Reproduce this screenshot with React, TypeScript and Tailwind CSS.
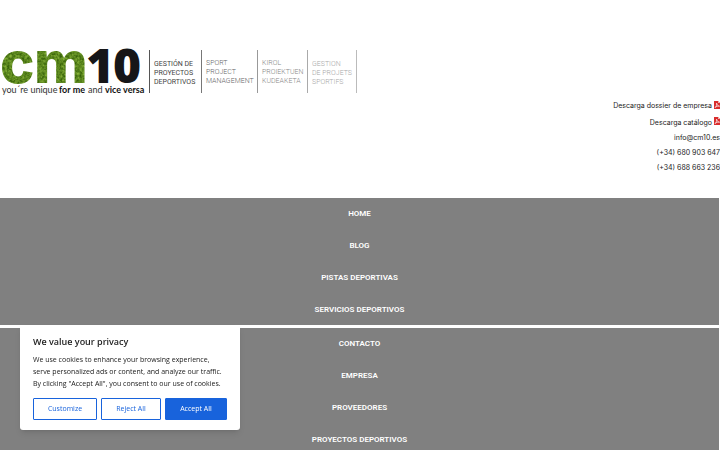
import { useState } from "react";

const mainLinks = ["HOME", "BLOG", "PISTAS DEPORTIVAS", "SERVICIOS DEPORTIVOS"];
const companyLinks = ["CONTACTO", "EMPRESA", "PROVEEDORES", "PROYECTOS DEPORTIVOS"];

function Logo() {
  return (
    <svg width="360" height="49" viewBox="0 0 360 49" role="img" aria-label="cm10" className="block overflow-visible">
      <defs>
        <filter id="grass" x="0" y="0" width="100%" height="100%" colorInterpolationFilters="sRGB">
          <feTurbulence type="fractalNoise" baseFrequency="0.4" numOctaves="2" seed="4" />
          <feColorMatrix values="0.5 0 0 0 0.11  0.5 0 0 0 0.28  0.3 0 0 0 -0.03  0 0 0 0 1" />
          <feComposite in2="SourceGraphic" operator="in" />
        </filter>
      </defs>
      <g filter="url(#grass)" fill="#5b8c1f" fontFamily="Inter, sans-serif" fontSize="58" fontWeight="800">
        <text x="0" y="35">c</text>
        <text x="34" y="35">m</text>
      </g>
      <g fill="#161618" fontFamily="'Open Sans', sans-serif" fontSize="48" fontWeight="800">
        <text x="86" y="35">1</text>
        <text x="113" y="35">0</text>
      </g>
      <g fontFamily="Lato, sans-serif" fontSize="9" fill="#333">
        <text x="2" y="45">you´re unique</text>
        <text x="59" y="45" fontWeight="700" fill="#111">for me</text>
        <text x="88" y="45">and</text>
        <text x="105" y="45" fontWeight="700" fill="#111">vice versa</text>
      </g>
      <g fontFamily="Roboto, sans-serif" fontSize="7" fontWeight="300">
        <g fill="#444" fontWeight="400">
          <text x="154" y="18">GESTIÓN DE</text>
          <text x="154" y="27">PROYECTOS</text>
          <text x="154" y="36">DEPORTIVOS</text>
        </g>
        <g fill="#666">
          <text x="206" y="17">SPORT</text>
          <text x="206" y="26">PROJECT</text>
          <text x="206" y="35">MANAGEMENT</text>
        </g>
        <g fill="#888">
          <text x="262" y="17">KIROL</text>
          <text x="262" y="26">PROIEKTUEN</text>
          <text x="262" y="35">KUDEAKETA</text>
        </g>
        <g fill="#a8a8a8">
          <text x="312" y="18">GESTION</text>
          <text x="312" y="27">DE PROJETS</text>
          <text x="312" y="36">SPORTIFS</text>
        </g>
      </g>
      <path d="M149.500 2V45" stroke="#555" />
      <path d="M201.500 2V45" stroke="#777" />
      <path d="M257.500 2V45" stroke="#999" />
      <path d="M307.500 2V45" stroke="#aaa" />
      <path d="M356.500 2V45" stroke="#bbb" />
    </svg>
  );
}

function PdfIcon() {
  return (
    <svg width="6" height="8" viewBox="0 0 6 8" aria-hidden="true" className="mb-[2px] shrink-0">
      <path d="M0 0H4L6 2V8H0Z" fill="#d92d2d" />
      <path d="M4 0V2H6Z" fill="#f3b5b5" />
      <path d="M1 6.500C2.500 5.500 2.800 3.500 2.600 2.200C3 4 4 5 5.500 5.200C4 4.800 2.500 5.300 1 6.500Z" fill="none" stroke="#fff" strokeWidth="0.700" />
    </svg>
  );
}

function Menu({ label, items }: { label: string; items: string[] }) {
  return (
    <nav aria-label={label} className="mr-px bg-[#808080]">
      <ul>
        {items.map((item) => (
          <li key={item} className="h-8 last:h-[31px]">
            <a href="#" className="flex justify-center pt-[10px] text-[8px] leading-[12px] font-semibold text-white">
              {item}
            </a>
          </li>
        ))}
      </ul>
    </nav>
  );
}

function CookieBanner({ onClose }: { onClose: () => void }) {
  return (
    <section
      aria-label="We value your privacy"
      className="fixed bottom-5 left-5 w-[220px] rounded-[3px] bg-white px-[13px] py-[10px] font-['Open_Sans',sans-serif] text-[#212121] shadow-md"
    >
      <h2 className="text-[9px] leading-[14px] font-semibold">We value your privacy</h2>
      <p className="mt-[5px] text-[7px] leading-3">
        We use cookies to enhance your browsing experience, serve personalized ads or content, and analyze our traffic. By clicking "Accept All", you consent to our use of cookies.
      </p>
      <div className="mt-2 flex gap-1 text-[7px] leading-3 text-[#1863dc]">
        <button type="button" className="h-[22px] w-16 rounded-[1px] border border-[#1863dc]">
          Customize
        </button>
        <button type="button" onClick={onClose} className="h-[22px] w-[60px] rounded-[1px] border border-[#1863dc]">
          Reject All
        </button>
        <button type="button" onClick={onClose} className="h-[22px] flex-1 rounded-[1px] border border-[#1863dc] bg-[#1863dc] text-white">
          Accept All
        </button>
      </div>
    </section>
  );
}

export default function App() {
  const [showBanner, setShowBanner] = useState(true);

  return (
    <div className="h-screen overflow-hidden bg-white font-[Roboto,sans-serif]">
      <header className="pt-12 pb-[23px]">
        <a href="#" className="block">
          <Logo />
        </a>
        <address className="flex flex-col items-end font-[Inter,sans-serif] text-[7px] leading-[15px] text-[#222] not-italic">
          <a href="#" className="flex h-[17px] items-center gap-[2px]">
            Descarga dossier de empresa <PdfIcon />
          </a>
          <a href="#" className="flex h-4 items-center gap-[2px]">
            Descarga catálogo <PdfIcon />
          </a>
          <a href="mailto:info@cm10.es">info@cm10.es</a>
          <a href="tel:+34680903647">(+34) 680 903 647</a>
          <a href="tel:+34688663236">(+34) 688 663 236</a>
        </address>
      </header>
      <div className="flex flex-col gap-[3px]">
        <Menu label="Principal" items={mainLinks} />
        <Menu label="Empresa" items={companyLinks} />
      </div>
      {showBanner && <CookieBanner onClose={() => setShowBanner(false)} />}
    </div>
  );
}
